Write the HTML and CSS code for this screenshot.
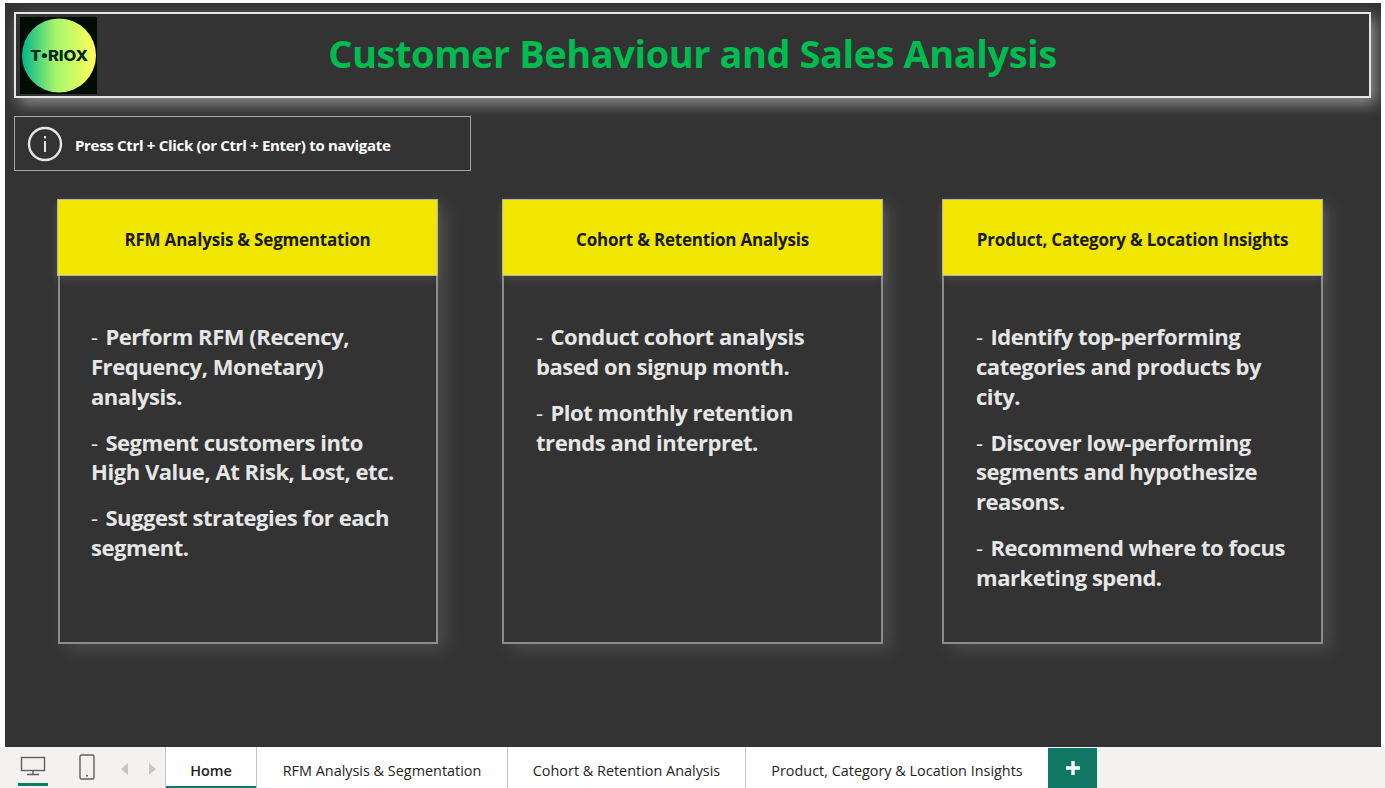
FILE: index.html
```html
<!DOCTYPE html>
<html lang="en">
<head>
<meta charset="utf-8">
<title>Customer Behaviour and Sales Analysis</title>
<link rel="stylesheet" href="styles.css">
</head>
<body>
<div class="app">
  <main class="canvas">
    <header class="banner">
      <div class="logo">
        <svg class="logo-art" width="77" height="77" viewBox="0 0 77 77">
          <defs>
            <linearGradient id="lg" x1="0" x2="1" y1="0" y2="0">
              <stop offset="0" stop-color="#00b68a"/>
              <stop offset="0.45" stop-color="#a5f56c"/>
              <stop offset="1" stop-color="#ffff5a"/>
            </linearGradient>
          </defs>
          <rect width="77" height="77" fill="#000c04"/>
          <circle cx="39" cy="38.5" r="37" fill="url(#lg)"/>
          <text x="39" y="44" class="logo-text" text-anchor="middle" textLength="58" lengthAdjust="spacingAndGlyphs">T•RIOX</text>
        </svg>
      </div>
      <h1 class="title">Customer Behaviour and Sales Analysis</h1>
    </header>
    <div class="hint">
      <svg class="hint-icon" width="36" height="36" viewBox="0 0 36 36">
        <circle cx="18" cy="18" r="16" fill="none" stroke="#e6e6e6" stroke-width="2.4"/>
        <rect x="17" y="15" width="2" height="11" fill="#e6e6e6"/>
        <rect x="17" y="10" width="2" height="2.5" fill="#e6e6e6"/>
      </svg>
      <span class="hint-text">Press Ctrl + Click (or Ctrl + Enter) to navigate</span>
    </div>
    <section class="cards">
      <article class="card">
        <h2 class="card-head">RFM Analysis &amp; Segmentation</h2>
        <div class="card-body">
          <p>- Perform RFM (Recency, Frequency, Monetary) analysis.</p>
          <p>- Segment customers into High Value, At Risk, Lost, etc.</p>
          <p>- Suggest strategies for each segment.</p>
        </div>
      </article>
      <article class="card">
        <h2 class="card-head">Cohort &amp; Retention Analysis</h2>
        <div class="card-body">
          <p>- Conduct cohort analysis based on signup month.</p>
          <p>- Plot monthly retention trends and interpret.</p>
        </div>
      </article>
      <article class="card">
        <h2 class="card-head">Product, Category &amp; Location Insights</h2>
        <div class="card-body">
          <p>- Identify top-performing categories and products by city.</p>
          <p>- Discover low-performing segments and hypothesize reasons.</p>
          <p>- Recommend where to focus marketing spend.</p>
        </div>
      </article>
    </section>
  </main>
  <nav class="tabbar">
    <div class="tools">
      <span class="device active">
        <svg width="26" height="20" viewBox="0 0 26 20"><rect x="1.5" y="1.5" width="23" height="13" fill="none" stroke="#605e5c" stroke-width="1.4"/><path d="M13 15v3M7 18.5h12" stroke="#605e5c" stroke-width="1.4" fill="none"/></svg>
      </span>
      <span class="device phone">
        <svg width="16" height="26" viewBox="0 0 16 26"><rect x="1" y="1" width="14" height="24" rx="1.5" fill="none" stroke="#605e5c" stroke-width="1.4"/><rect x="7" y="21" width="2" height="1.5" fill="#605e5c"/></svg>
      </span>
      <span class="arrows">
        <svg width="8" height="12" viewBox="0 0 8 12"><path d="M7 0v12L0 6z" fill="#c8c6c4"/></svg>
        <svg width="8" height="12" viewBox="0 0 8 12"><path d="M1 0v12l7-6z" fill="#c8c6c4"/></svg>
      </span>
    </div>
    <a class="tab current tab-home">Home</a>
    <a class="tab tab-rfm">RFM Analysis &amp; Segmentation</a>
    <a class="tab tab-cohort">Cohort &amp; Retention Analysis</a>
    <a class="tab tab-product">Product, Category &amp; Location Insights</a>
    <span class="add">
      <svg width="14" height="14" viewBox="0 0 14 14"><path d="M7 0v14M0 7h14" stroke="#fff" stroke-width="3.4"/></svg>
    </span>
  </nav>
</div>
</body>
</html>
```
FILE: styles.css
```css
* { box-sizing: border-box; }
html, body { margin: 0; padding: 0; }
body {
  width: 1385px;
  height: 788px;
  overflow: hidden;
  background: #fff;
  font-family: "Open Sans", "Noto Sans", "Liberation Sans", sans-serif;
}
.app { display: flex; flex-direction: column; height: 788px; padding-top: 3px; }
.canvas {
  width: 1376px;
  height: 744px;
  margin-left: 5px;
  background: #333;
  padding: 9px 10px 0 9px;
}
.banner {
  display: flex;
  align-items: center;
  width: 1357px;
  height: 86px;
  border: 2px solid #e6e6e6;
  padding-left: 4px;
  box-shadow: 5px 6px 14px rgba(255, 255, 255, 0.45);
}
.logo { flex: none; width: 77px; height: 77px; }
.logo-art { display: block; }
.logo-text { font-family: Inter, sans-serif; font-size: 15px; font-weight: 800; fill: #04261c; }
.title {
  flex: 1;
  margin: 0 0 4px;
  padding-right: 81px;
  text-align: center;
  font-size: 38px;
  line-height: 50px;
  font-weight: 700;
  color: #00bb50;
  letter-spacing: -0.45px;
}
.hint {
  display: flex;
  align-items: center;
  gap: 12px;
  width: 457px;
  height: 55px;
  margin-top: 18px;
  border: 1px solid #a6a6a6;
  padding: 0 0 0 12px;
}
.hint-icon { flex: none; }
.hint-text { padding-top: 3px; font-size: 15px; font-weight: 700; color: #fff; letter-spacing: -0.31px; }
.cards { display: flex; gap: 59px; margin-top: 28px; padding-left: 43px; }
.card {
  flex: none;
  width: 381px;
  height: 445px;
  display: flex;
  flex-direction: column;
  box-shadow: 8px 6px 18px rgba(255, 255, 255, 0.12);
}
.card:nth-child(2) { margin-left: 5px; }
.card-head {
  flex: none;
  height: 77px;
  margin: 0;
  padding-top: 3px;
  display: flex;
  align-items: center;
  justify-content: center;
  background: #f0e600;
  border: 1px solid #b3b3b3;
  font-size: 17px;
  font-weight: 700;
  color: #1a1a1a;
  letter-spacing: -0.2px;
  box-shadow: 0 4px 10px rgba(255, 255, 255, 0.1);
}
.card-body {
  flex: 1;
  border: 2px solid #8c8c8c;
  border-top: 0;
  padding: 46px 29px 0 32px;
  color: #e6e6e6;
  font-size: 22px;
  font-weight: 700;
  line-height: 29.8px;
  letter-spacing: -0.45px;
}
.card:first-child .card-body { margin-left: 1px; padding-left: 31px; }
.card-body p { margin: 0 0 16.2px; }
.card-body p::first-letter { font-weight: 400; margin-right: 2.5px; }
.tabbar {
  flex: 1;
  display: flex;
  align-items: stretch;
  background: #f3f2f1;
  color: #252423;
  font-size: 14.42px;
  padding-left: 5px;
}
.tools { flex: none; width: 160px; display: flex; align-items: flex-start; }
.device { display: flex; justify-content: center; }
.device.active {
  width: 30px;
  height: 39px;
  margin-left: 13px;
  padding-top: 9px;
  border-bottom: 3px solid #117865;
}
.device.phone { margin-left: 31px; padding-top: 7px; }
.arrows { display: flex; gap: 19px; margin-left: 26px; padding-top: 16px; }
.tab {
  flex: none;
  display: flex;
  align-items: center;
  justify-content: center;
  padding-top: 6px;
  background: #fff;
  border-left: 1px solid #c8c6c4;
}
.tab-home { width: 91px; }
.tab-rfm { width: 251px; }
.tab-cohort { width: 238px; }
.tab-product { width: 303px; }
.tab.current { font-weight: 600; box-shadow: inset 0 -2px 0 #117865; }
.add {
  flex: none;
  width: 49px;
  display: flex;
  align-items: center;
  justify-content: center;
  background: #117865;
  margin-top: 1px;
}
```
